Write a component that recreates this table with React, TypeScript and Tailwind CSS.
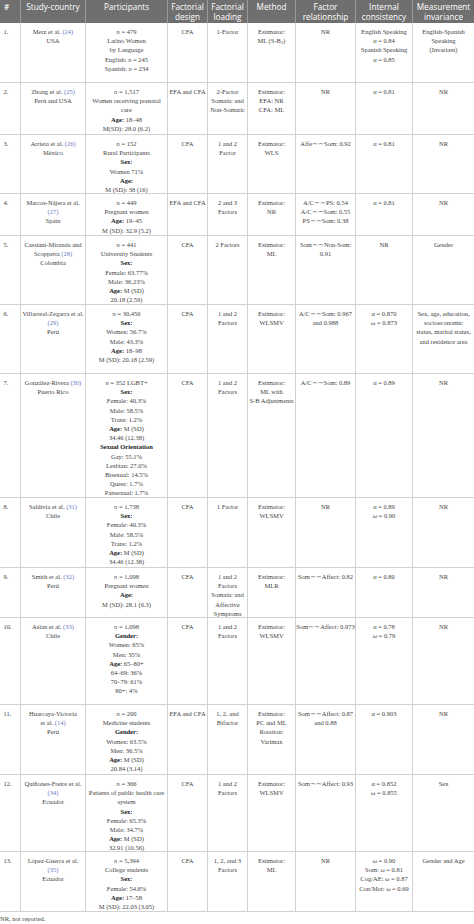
import React from "react";

const Rf = ({ c }: { c: string }) => <span className="text-[#6b7bc4]">({c})</span>;
const N = () => <i>n</i>;
const Bd = ({ c }: { c: string }) => <b className="font-bold text-[#222]">{c}</b>;

type Row = { h: string; num: string; cells: React.ReactNode[][] };

const widths = [
  "w-[21px]",
  "w-[65px]",
  "w-[82px]",
  "w-[40px]",
  "w-[40px]",
  "w-[48px]",
  "w-[60px]",
  "w-[57px]",
  "w-[61px]",
];

const headers: React.ReactNode[][] = [
  ["#"],
  ["Study-country"],
  ["Participants"],
  ["Factorial", "design"],
  ["Factorial", "loading"],
  ["Method"],
  ["Factor", "relationship"],
  ["Internal", "consistency"],
  ["Measurement", "invariance"],
];

const rows: Row[] = [
  {
    h: "h-[60px]",
    num: "1.",
    cells: [
      [<>Merz et al. <Rf c="24" /></>, "USA"],
      [<><N /> = 479</>, "Latino Women", "by Language", <>English: <N /> = 245</>, <>Spanish: <N /> = 234</>],
      ["CFA"],
      ["1-Factor"],
      ["Estimator:", <>ML (S-B<sub>2</sub>)</>],
      ["NR"],
      ["English Speaking", "α = 0.84", "Spanish Speaking", "α = 0.85"],
      ["English-Spanish", "Speaking", "(Invariant)"],
    ],
  },
  {
    h: "h-[52px]",
    num: "2.",
    cells: [
      [<>Zhong et al. <Rf c="25" /></>, "Perú and USA"],
      [<><N /> = 1,517</>, "Women receiving prenatal", "care", <><Bd c="Age:" /> 18–48</>, "M(SD): 28.0 (6.2)"],
      ["EFA and CFA"],
      ["2-Factor", "Somatic and", "Non-Somatic"],
      ["Estimator:", "EFA: NR", "CFA: ML"],
      ["NR"],
      ["α = 0.81"],
      ["NR"],
    ],
  },
  {
    h: "h-[59px]",
    num: "3.",
    cells: [
      [<>Arrieta et al. <Rf c="26" /></>, "México"],
      [<><N /> = 152</>, "Rural Participants", <Bd c="Sex:" />, "Women 71%", <Bd c="Age:" />, "M (SD): 38 (16)"],
      ["CFA"],
      ["1 and 2", "Factor"],
      ["Estimator:", "WLS"],
      ["Affe∼∼Som: 0.92"],
      ["α = 0.81"],
      ["NR"],
    ],
  },
  {
    h: "h-[42px]",
    num: "4.",
    cells: [
      ["Marcos-Nájera et al.", <Rf c="27" />, "Spain"],
      [<><N /> = 449</>, "Pregnant women", <><Bd c="Age:" /> 19–45</>, "M (SD): 32.9 (5.2)"],
      ["EFA and CFA"],
      ["2 and 3", "Factors"],
      ["Estimator:", "NR"],
      ["A/C∼∼PS: 0.54", "A/C∼∼Som: 0.55", "PS∼∼Som: 0.38"],
      ["α = 0.81"],
      ["NR"],
    ],
  },
  {
    h: "h-[69px]",
    num: "5.",
    cells: [
      ["Cassiani-Miranda and", <>Scoppetta <Rf c="28" /></>, "Colombia"],
      [<><N /> = 441</>, "University Students", <Bd c="Sex:" />, "Female: 63.77%", "Male: 36.23%", <><Bd c="Age:" /> M (SD)</>, "20.18 (2.59)"],
      ["CFA"],
      ["2 Factors"],
      ["Estimator:", "ML"],
      ["Som∼∼Non-Som:", "0.91"],
      ["NR"],
      ["Gender"],
    ],
  },
  {
    h: "h-[69px]",
    num: "6.",
    cells: [
      ["Villarreal-Zegarra et al.", <Rf c="29" />, "Perú"],
      [<><N /> = 30,456</>, <Bd c="Sex:" />, "Women: 56.7%", "Male: 43.3%", <><Bd c="Age:" /> 18–98</>, "M (SD): 20.18 (2.59)"],
      ["CFA"],
      ["1 and 2", "Factors"],
      ["Estimator:", "WLSMV"],
      ["A/C∼∼Som: 0.967", "and 0.988"],
      ["α = 0.870", "ω = 0.873"],
      ["Sex, age, education,", "socioeconomic", "status, marital status,", "and residence area"],
    ],
  },
  {
    h: "h-[124px]",
    num: "7.",
    cells: [
      [<>González-Rivera <Rf c="30" /></>, "Puerto Rico"],
      [
        <><N /> = 352 LGBT+</>,
        <Bd c="Sex:" />,
        "Female: 40.3%",
        "Male: 58.5%",
        "Trans: 1.2%",
        <><Bd c="Age:" /> M (SD)</>,
        "34.46 (12.38)",
        <Bd c="Sexual Orientation" />,
        "Gay: 55.1%",
        "Lesbian: 27.0%",
        "Bisexual: 14.5%",
        "Queer: 1.7%",
        "Pansexual: 1.7%",
      ],
      ["CFA"],
      ["1 and 2", "Factors"],
      ["Estimator:", "ML with", "S-B Adjustments"],
      ["A/C∼∼Som: 0.89"],
      ["α = 0.89"],
      ["NR"],
    ],
  },
  {
    h: "h-[70px]",
    num: "8.",
    cells: [
      [<>Saldivia et al. <Rf c="31" /></>, "Chile"],
      [<><N /> = 1,738</>, <Bd c="Sex:" />, "Female: 40.3%", "Male: 58.5%", "Trans: 1.2%", <><Bd c="Age:" /> M (SD)</>, "34.46 (12.38)"],
      ["CFA"],
      ["1 Factor"],
      ["Estimator:", "WLSMV"],
      ["NR"],
      ["α = 0.89", "ω = 0.90"],
      ["NR"],
    ],
  },
  {
    h: "h-[50px]",
    num: "9.",
    cells: [
      [<>Smith et al. <Rf c="32" /></>, "Perú"],
      [<><N /> = 1,098</>, "Pregnant women", <Bd c="Age:" />, "M (SD): 28.1 (6.3)"],
      ["CFA"],
      ["1 and 2", "Factors", "Somatic and", "Affective", "Symptoms"],
      ["Estimator:", "MLR"],
      ["Som∼∼Affect: 0.82"],
      ["α = 0.80"],
      ["NR"],
    ],
  },
  {
    h: "h-[87px]",
    num: "10.",
    cells: [
      [<>Aslan et al. <Rf c="33" /></>, "Chile"],
      [<><N /> = 1,098</>, <Bd c="Gender:" />, "Women: 65%", "Men: 35%", <><Bd c="Age:" /> 65–80+</>, "64–69: 36%", "70–79: 61%", "80+: 4%"],
      ["CFA"],
      ["1 and 2", "Factors"],
      ["Estimator:", "WLSMV"],
      ["Som∼∼Affect: 0.973"],
      ["α = 0.78", "ω = 0.79"],
      ["NR"],
    ],
  },
  {
    h: "h-[70px]",
    num: "11.",
    cells: [
      ["Huarcaya-Victoria", <>et al. <Rf c="14" /></>, "Perú"],
      [<><N /> = 200</>, "Medicine students", <Bd c="Gender:" />, "Women: 63.5%", "Men: 36.5%", <><Bd c="Age:" /> M (SD)</>, "20.84 (3.14)"],
      ["EFA and CFA"],
      ["1, 2, and", "Bifactor"],
      ["Estimator:", "PC and ML", "Rotation:", "Varimax"],
      ["Som∼∼Affect: 0.87", "and 0.88"],
      ["α = 0.903"],
      ["NR"],
    ],
  },
  {
    h: "h-[77px]",
    num: "12.",
    cells: [
      ["Quiñones-Freire et al.", <Rf c="34" />, "Ecuador"],
      [<><N /> = 366</>, "Patients of public health care", "system", <Bd c="Sex:" />, "Female: 65.3%", "Male: 34.7%", <><Bd c="Age:" /> M (SD)</>, "32.91 (10.56)"],
      ["CFA"],
      ["1 and 2", "Factors"],
      ["Estimator:", "WLSMV"],
      ["Som∼∼Affect: 0.93"],
      ["α = 0.852", "ω = 0.855"],
      ["Sex"],
    ],
  },
  {
    h: "h-[60px]",
    num: "13.",
    cells: [
      ["López-Guerra et al.", <Rf c="35" />, "Ecuador"],
      [<><N /> = 5,394</>, "College students", <Bd c="Sex:" />, "Female: 54.8%", <><Bd c="Age:" /> 17–58</>, "M (SD): 22.03 (3.05)"],
      ["CFA"],
      ["1, 2, and 3", "Factors"],
      ["Estimator:", "ML"],
      ["NR"],
      ["ω = 0.90", "Som: ω = 0.81", "Cog/AE: ω = 0.87", "Con/Mot: ω = 0.69"],
      ["Gender and Age"],
    ],
  },
];

export default function App() {
  return (
    <div className="w-[474px] bg-white text-[#3f3f3f] [font-family:'Liberation_Serif','Times_New_Roman',serif]">
      <div className="flex h-[23px] bg-[#6f6f6f] text-white [font-family:'Open_Sans','Liberation_Sans',sans-serif] text-[8.2px] leading-[9.5px]">
        {headers.map((lines, i) => (
          <div
            key={i}
            className={`${widths[i]} shrink-0 pt-[2px] ${i === 0 ? "pl-[4px] text-left font-semibold" : "text-center"} ${i < 8 ? "border-r border-[#9a9a9a]" : ""}`}
          >
            {lines.map((l, j) => (
              <div key={j} className="whitespace-nowrap">
                {l}
              </div>
            ))}
          </div>
        ))}
      </div>
      {rows.map((r, ri) => (
        <div key={ri} className={`flex ${r.h} border-b border-[#d2d2d2] text-[6.5px] leading-[9.2px]`}>
          <div className={`${widths[0]} shrink-0 pt-[4px] pl-[3.5px] border-r border-[#d2d2d2]`}>{r.num}</div>
          {r.cells.map((lines, ci) => (
            <div
              key={ci}
              className={`${widths[ci + 1]} shrink-0 pt-[4px] text-center ${ci < 7 ? "border-r border-[#d2d2d2]" : ""}`}
            >
              {lines.map((l, j) => (
                <div key={j} className="whitespace-nowrap">
                  {l}
                </div>
              ))}
            </div>
          ))}
        </div>
      ))}
      <div className="pt-[2px] text-[6.5px] leading-[9px] text-[#444]">NR, not reported.</div>
    </div>
  );
}
